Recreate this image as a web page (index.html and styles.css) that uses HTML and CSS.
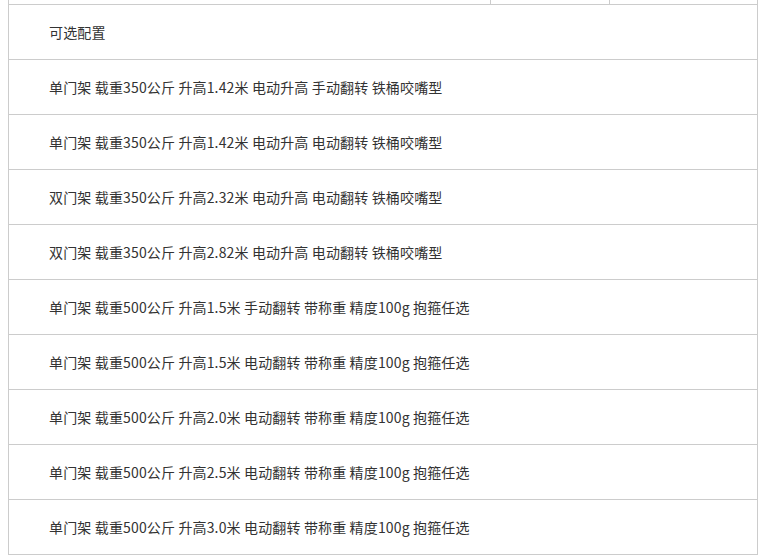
FILE: index.html
```html
<!DOCTYPE html>
<html lang="zh">
<head>
<meta charset="utf-8">
<link rel="stylesheet" href="styles.css">
</head>
<body>
<table class="spec">
  <tr class="cut">
    <td class="c1"></td>
    <td class="c2"></td>
    <td class="c3"></td>
  </tr>
  <tr><td colspan="3">可选配置</td></tr>
  <tr><td colspan="3">单门架 载重350公斤 升高1.42米 电动升高 手动翻转 铁桶咬嘴型</td></tr>
  <tr><td colspan="3">单门架 载重350公斤 升高1.42米 电动升高 电动翻转 铁桶咬嘴型</td></tr>
  <tr><td colspan="3">双门架 载重350公斤 升高2.32米 电动升高 电动翻转 铁桶咬嘴型</td></tr>
  <tr><td colspan="3">双门架 载重350公斤 升高2.82米 电动升高 电动翻转 铁桶咬嘴型</td></tr>
  <tr><td colspan="3">单门架 载重500公斤 升高1.5米 手动翻转 带称重 精度100g 抱箍任选</td></tr>
  <tr><td colspan="3">单门架 载重500公斤 升高1.5米 电动翻转 带称重 精度100g 抱箍任选</td></tr>
  <tr><td colspan="3">单门架 载重500公斤 升高2.0米 电动翻转 带称重 精度100g 抱箍任选</td></tr>
  <tr><td colspan="3">单门架 载重500公斤 升高2.5米 电动翻转 带称重 精度100g 抱箍任选</td></tr>
  <tr><td colspan="3">单门架 载重500公斤 升高3.0米 电动翻转 带称重 精度100g 抱箍任选</td></tr>
</table>
</body>
</html>
```
FILE: styles.css
```css
html, body {
  margin: 0;
  padding: 0;
  background: #fff;
}
body {
  padding: 0 7px 0 8px;
  font-family: "Noto Sans CJK SC", "Noto Sans", sans-serif;
  font-size: 14px;
  letter-spacing: 0.15px;
  color: #333;
}
.spec {
  width: 750px;
  border-collapse: collapse;
  table-layout: fixed;
}
.spec td {
  border: 1px solid #ccc;
  height: 55px;
  padding: 1px 0 0 40px;
  line-height: 20px;
  vertical-align: middle;
  box-sizing: border-box;
}
.spec tr:first-child td {
  border-top: none;
}
.spec .cut td {
  height: 4px;
  padding: 0;
}
.spec .c1 { width: 482px; }
.spec .c2 { width: 119px; }
.spec .c3 { width: auto; }
```
